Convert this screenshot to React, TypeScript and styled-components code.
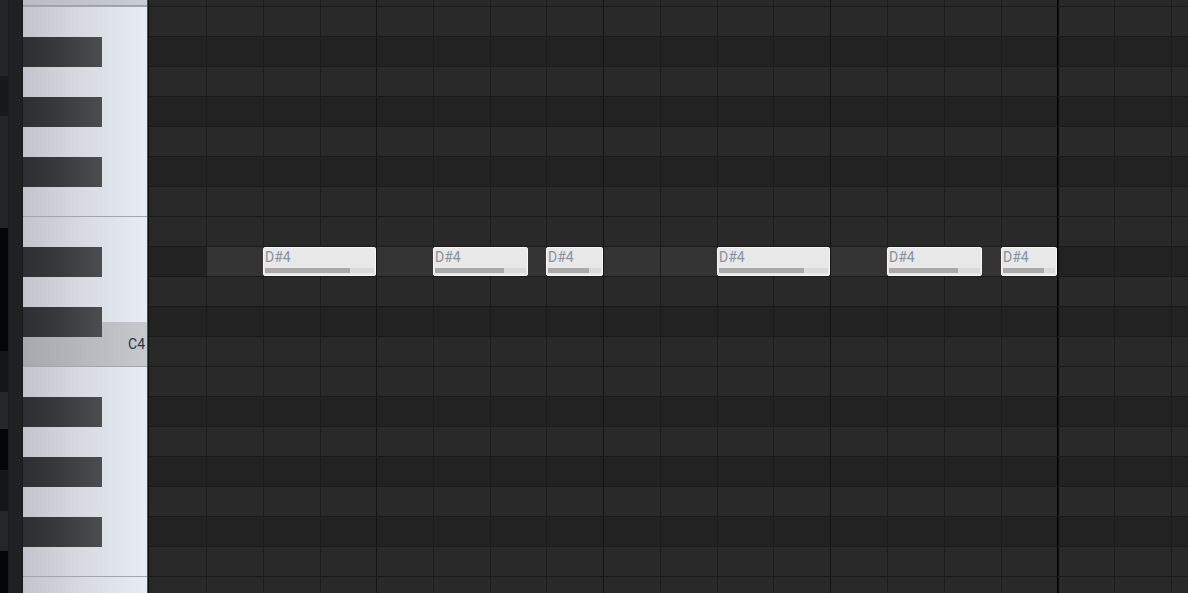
import React from "react";
import styled, { createGlobalStyle } from "styled-components";

const Global = createGlobalStyle`
  html, body {
    margin: 0;
    padding: 0;
    background: #222222;
    overflow: hidden;
  }
  #root {
    height: 593px;
  }
`;

const Frame = styled.div`
  display: flex;
  width: 1188px;
  height: 593px;
  overflow: hidden;
  font-family: Roboto, "Liberation Sans", sans-serif;
`;

const SideStrip = styled.div`
  display: flex;
  flex-direction: column;
  width: 8px;
  flex: none;
`;

const SideBlock = styled.div<{ $h: number; $c: string }>`
  height: ${(p) => p.$h}px;
  background: ${(p) => p.$c};
  flex: none;
`;

const Gutter = styled.div`
  width: 15px;
  flex: none;
  box-sizing: border-box;
  background: #1f2021;
  border-left: 1px solid #19191a;
  border-right: 1px solid #161718;
`;

const Piano = styled.div`
  width: 125px;
  flex: none;
  box-sizing: border-box;
  border-right: 1px solid #4e5054;
  display: flex;
  flex-direction: column;
  background: linear-gradient(to right, #c1c5cb 0%, #d6dae0 45%, #e8ecf4 100%);
`;

const PianoRow = styled.div<{ $h: number; $sep: boolean; $cTop: boolean; $c: boolean; $top: boolean }>`
  height: ${(p) => p.$h}px;
  flex: none;
  box-sizing: border-box;
  display: flex;
  align-items: flex-start;
  justify-content: space-between;
  border-top: ${(p) => (p.$sep ? "1px solid #a2a5aa" : "none")};
  ${(p) =>
    p.$top
      ? `background: linear-gradient(to right, #b9bcc2, #cacdd3); border-bottom: 1px solid #9da0a6;`
      : ""}
  ${(p) =>
    p.$cTop
      ? `background: linear-gradient(to right, #a5a8ad, #c6c9ce) 0 16px / 100% 14px no-repeat;`
      : ""}
  ${(p) => (p.$c ? `background: linear-gradient(to right, #a5a8ad, #c6c9ce);` : "")}
`;

const BlackKey = styled.div`
  position: relative;
  z-index: 1;
  margin-top: 1px;
  width: 79px;
  height: 30px;
  flex: none;
  background: linear-gradient(to right, #2d2e31 0%, #3a3b3e 50%, #4c4d50 100%);
`;

const KeyLabel = styled.span`
  margin-left: auto;
  padding-right: 2px;
  font-size: 14px;
  line-height: 17px;
  color: #2f353d;
`;

const Grid = styled.div`
  flex: 1;
  box-sizing: border-box;
  border-left: 1px solid #111111;
  display: flex;
  flex-direction: column;
  min-width: 0;
`;

const GridRow = styled.div<{ $h: number; $dark: boolean; $line: boolean }>`
  position: relative;
  height: ${(p) => p.$h}px;
  flex: none;
  box-sizing: border-box;
  display: flex;
  border-top: ${(p) => (p.$line ? "1px solid #1a1a1a" : "none")};
  background: ${(p) => (p.$dark ? "#222222" : "#292929")};
`;

type LineKind = "none" | "beat" | "bar" | "end";

const lineColor: Record<LineKind, string> = {
  none: "transparent",
  beat: "#1c1c1c",
  bar: "#131313",
  end: "#000000",
};

const Cell = styled.div<{ $w: number; $line: LineKind; $hl: boolean }>`
  width: ${(p) => p.$w}px;
  flex: none;
  box-sizing: border-box;
  border-left: ${(p) => (p.$line === "none" ? "none" : `1px solid ${lineColor[p.$line]}`)};
  ${(p) => (p.$line === "end" ? "box-shadow: inset 1px 0 0 #101010;" : "")}
  background: ${(p) => (p.$hl ? "#343434" : "transparent")};
`;

const NoteBox = styled.div`
  position: absolute;
  top: 0;
  height: 29px;
  box-sizing: border-box;
  border: 1px solid #f6f6f6;
  border-radius: 2px;
  background: #e8e8e8;
  display: flex;
  flex-direction: column;
  padding: 1px 1px 1px 1px;
`;

const NoteLabel = styled.span`
  font-size: 14px;
  line-height: 16px;
  color: #8a919b;
  white-space: nowrap;
  overflow: hidden;
`;

const VelocityTrack = styled.div`
  margin-top: auto;
  margin-bottom: 1px;
  height: 5px;
  background: #dadada;
  display: flex;
`;

const VelocityFill = styled.div`
  height: 100%;
  background: #a9a9a9;
`;

const ROW_NAMES = [
  "B4", "A#4", "A4", "G#4", "G4", "F#4", "F4", "E4", "D#4", "D4", "C#4", "C4",
  "B3", "A#3", "A3", "G#3", "G3", "F#3", "F3", "E3",
];

const BOUNDS = [149, 206, 263, 320, 376, 433, 490, 546, 603, 660, 717, 773, 830, 887, 944, 1001, 1057, 1114, 1171, 1188];
const BAR_LINES = [376, 603, 830];
const END_LINE = 1057;

const CELLS = BOUNDS.slice(0, -1).map((x, i) => {
  const w = BOUNDS[i + 1] - x;
  let line: LineKind = "beat";
  if (i === 0) line = "none";
  else if (x === END_LINE) line = "end";
  else if (BAR_LINES.includes(x)) line = "bar";
  return { x, w, line };
});

const NOTES = [
  { x: 263, w: 113, vel: 0.78 },
  { x: 433, w: 95, vel: 0.76 },
  { x: 546, w: 57, vel: 0.78 },
  { x: 717, w: 113, vel: 0.78 },
  { x: 887, w: 95, vel: 0.76 },
  { x: 1001, w: 56, vel: 0.78 },
];

const SIDE_BLOCKS = [
  { h: 76, c: "#252525" },
  { h: 40, c: "#17181a" },
  { h: 112, c: "#252525" },
  { h: 123, c: "#040507" },
  { h: 41, c: "#151618" },
  { h: 37, c: "#262626" },
  { h: 41, c: "#040507" },
  { h: 41, c: "#151618" },
  { h: 40, c: "#262626" },
  { h: 42, c: "#040507" },
];

const rows = [
  { name: "C5", h: 6, top: true },
  ...ROW_NAMES.map((n) => ({ name: n, h: n === "E3" ? 17 : 30, top: false })),
];

export default function App() {
  return (
    <>
      <Global />
      <Frame>
        <SideStrip>
          {SIDE_BLOCKS.map((b, i) => (
            <SideBlock key={i} $h={b.h} $c={b.c} />
          ))}
        </SideStrip>
        <Gutter />
        <Piano>
          {rows.map((r) => {
            const black = r.name.includes("#");
            const sep = !r.top && (r.name.startsWith("B") || r.name.startsWith("E"));
            return (
              <PianoRow
                key={r.name}
                $h={r.h}
                $sep={sep}
                $top={r.top}
                $cTop={r.name === "C#4"}
                $c={r.name === "C4"}
              >
                {black && <BlackKey />}
                {r.name === "C4" && <KeyLabel>C4</KeyLabel>}
              </PianoRow>
            );
          })}
        </Piano>
        <Grid>
          {rows.map((r) => {
            const black = r.name.includes("#");
            const active = r.name === "D#4";
            return (
              <GridRow key={r.name} $h={r.h} $dark={black} $line={!r.top}>
                {CELLS.map((c, i) => (
                  <Cell
                    key={i}
                    $w={c.w}
                    $line={c.line}
                    $hl={active && c.x >= 206 && c.x < END_LINE}
                  />
                ))}
                {active &&
                  NOTES.map((n, i) => (
                    <NoteBox key={i} style={{ left: n.x - 149, width: n.w }}>
                      <NoteLabel>D#4</NoteLabel>
                      <VelocityTrack>
                        <VelocityFill style={{ width: `${n.vel * 100}%` }} />
                      </VelocityTrack>
                    </NoteBox>
                  ))}
              </GridRow>
            );
          })}
        </Grid>
      </Frame>
    </>
  );
}
